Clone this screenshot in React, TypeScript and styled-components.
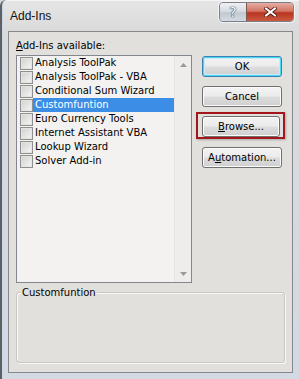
import React from "react";
import styled, { createGlobalStyle } from "styled-components";

const Global = createGlobalStyle`
  html, body { margin: 0; padding: 0; background: #d4d6da; }
  body { font-family: "Liberation Sans", Arial, sans-serif; }
`;

const Window = styled.div`
  width: 299px;
  height: 379px;
  box-sizing: border-box;
  display: flex;
  flex-direction: column;
  border-left: 2px solid #5e6064;
  border-top-left-radius: 6px;
  background: linear-gradient(180deg, #e6e6e6 0px, #dadada 31px, #d3dae4 100%);
  box-shadow: inset 1px 0 0 #c8d6e8, inset 0 1px 0 #f4f4f4;
  overflow: hidden;
`;

const TitleBar = styled.div`
  height: 31px;
  flex: none;
  display: flex;
  align-items: flex-start;
  justify-content: space-between;
  padding-left: 8px;
  padding-right: 5px;
`;

const Title = styled.div`
  font-size: 12px;
  line-height: 14px;
  margin-top: 9px;
  color: #111;
`;

const Caption = styled.div`
  display: flex;
  margin-top: 2px;
  border: 1px solid #7b7f86;
  border-radius: 4px;
  overflow: hidden;
  box-shadow: 0 0 0 1px rgba(255, 255, 255, 0.6);
`;

const CapBtn = styled.div<{ $close?: boolean }>`
  width: ${(p) => (p.$close ? 46 : 26)}px;
  height: 18px;
  display: flex;
  align-items: center;
  justify-content: center;
  background: ${(p) =>
    p.$close
      ? "linear-gradient(180deg, #e6aea4 0%, #d37464 45%, #b8341f 55%, #cb5a42 100%)"
      : "linear-gradient(180deg, #eef0f3 0%, #d8dce2 45%, #c3c9d1 55%, #d4dae1 100%)"};
  border-left: ${(p) => (p.$close ? "1px solid #7b5750" : "none")};
  font-family: "DejaVu Sans", sans-serif;
  font-size: 14px;
  color: #fff;
  text-shadow: 0 0 1px #3d4450, 0 0 1px #3d4450, 0 0 1px #3d4450;
  line-height: 1;
`;

const Client = styled.div`
  flex: 1;
  margin: 0 6px 6px 6px;
  border: 1px solid #85878b;
  background: #e2e0dd;
  padding: 7px 7px 9px 7px;
  display: flex;
  flex-direction: column;
  font-family: "DejaVu Sans", Verdana, sans-serif;
  font-size: 10px;
  color: #000;
`;

const Label = styled.div`
  line-height: 13px;
  height: 13px;
  margin-bottom: 3px;
  u { text-decoration: underline; }
`;

const TopRow = styled.div`
  display: flex;
  align-items: flex-start;
`;

const ListBox = styled.div`
  width: 176px;
  height: 228px;
  box-sizing: border-box;
  border: 1px solid #828790;
  background: #f3f2f0;
  display: flex;
`;

const Items = styled.div`
  flex: 1;
  display: flex;
  flex-direction: column;
`;

const Row = styled.div`
  height: 14px;
  display: flex;
  align-items: center;
`;

const Check = styled.span`
  width: 11px;
  height: 11px;
  flex: none;
  margin-left: 3px;
  border: 1px solid #8f8f8f;
  background: linear-gradient(135deg, #d0d0d0 0%, #ebebeb 70%, #f6f6f6 100%);
  box-shadow: inset 0 0 0 1px #e4e4e4;
`;

const ItemText = styled.span<{ $sel?: boolean }>`
  flex: 1;
  height: 14px;
  line-height: 14px;
  padding-left: 2px;
  white-space: nowrap;
  background: ${(p) => (p.$sel ? "#3b8de6" : "transparent")};
  color: ${(p) => (p.$sel ? "#fff" : "#000")};
`;

const ScrollBar = styled.div`
  width: 17px;
  flex: none;
  display: flex;
  flex-direction: column;
  justify-content: space-between;
  background: #eeedeb;
  border-left: 1px solid #e6e5e3;
  box-sizing: border-box;
`;

const ArrowBox = styled.div`
  height: 17px;
  display: flex;
  align-items: center;
  justify-content: center;
`;

const ButtonColumn = styled.div`
  margin-left: 10px;
  width: 80px;
  display: flex;
  flex-direction: column;
`;

const Button = styled.div<{ $default?: boolean; $mt?: number }>`
  height: 21px;
  box-sizing: border-box;
  margin-top: ${(p) => p.$mt ?? 0}px;
  border: 1px solid ${(p) => (p.$default ? "#3c7fb1" : "#707070")};
  border-radius: 3px;
  background: linear-gradient(180deg, #f3f3f3 0%, #ebebeb 48%, #dddddd 52%, #cfcfcf 100%);
  box-shadow: ${(p) =>
    p.$default ? "inset 0 0 0 1px #48d8f8, inset 0 0 0 2px #c8eaf6" : "inset 0 0 0 1px #fbfbfb"};
  display: flex;
  align-items: center;
  justify-content: center;
  u { text-decoration: underline; }
`;

const Highlight = styled.div`
  margin: 5px -3px 0 -6px;
  border: 2px solid #a3161b;
  padding: 2px 3px 0 4px;
  box-shadow: 1px 1px 2px rgba(0, 0, 0, 0.25);
`;

const GroupBox = styled.div`
  position: relative;
  margin-top: 9px;
  width: 269px;
  height: 71px;
  box-sizing: border-box;
  border: 1px solid #c9c7c4;
  border-radius: 3px;
  box-shadow: inset 1px 1px 0 #f8f8f8, 1px 1px 0 #f8f8f8;
`;

const GroupLegend = styled.span`
  position: absolute;
  top: -7px;
  left: 4px;
  padding: 0 1px;
  line-height: 13px;
  background: #e2e0dd;
`;

const items = [
  "Analysis ToolPak",
  "Analysis ToolPak - VBA",
  "Conditional Sum Wizard",
  "Customfuntion",
  "Euro Currency Tools",
  "Internet Assistant VBA",
  "Lookup Wizard",
  "Solver Add-in",
];

export default function App() {
  return (
    <>
      <Global />
      <Window>
        <TitleBar>
          <Title>Add-Ins</Title>
          <Caption>
            <CapBtn>?</CapBtn>
            <CapBtn $close>
              <svg width="13" height="10" viewBox="0 0 13 10">
                <path
                  d="M2 1.5 L11 8.5 M11 1.5 L2 8.5"
                  stroke="#4a1510"
                  strokeWidth="3.6"
                  strokeLinecap="square"
                />
                <path
                  d="M2 1.5 L11 8.5 M11 1.5 L2 8.5"
                  stroke="#ffffff"
                  strokeWidth="2"
                  strokeLinecap="square"
                />
              </svg>
            </CapBtn>
          </Caption>
        </TitleBar>
        <Client>
          <Label>
            <u>A</u>dd-Ins available:
          </Label>
          <TopRow>
            <ListBox>
              <Items>
                {items.map((it, i) => (
                  <Row key={it}>
                    <Check />
                    <ItemText $sel={i === 3}>{it}</ItemText>
                  </Row>
                ))}
              </Items>
              <ScrollBar>
                <ArrowBox>
                  <svg width="7" height="4" viewBox="0 0 7 4">
                    <path d="M0 4 L3.5 0 L7 4 Z" fill="#9a9a9a" />
                  </svg>
                </ArrowBox>
                <ArrowBox>
                  <svg width="7" height="4" viewBox="0 0 7 4">
                    <path d="M0 0 L3.5 4 L7 0 Z" fill="#9a9a9a" />
                  </svg>
                </ArrowBox>
              </ScrollBar>
            </ListBox>
            <ButtonColumn>
              <Button $default $mt={1}>OK</Button>
              <Button $mt={9}>Cancel</Button>
              <Highlight>
                <Button>
                  <span>
                    <u>B</u>rowse...
                  </span>
                </Button>
              </Highlight>
              <Button $mt={8}>
                <span>
                  A<u>u</u>tomation...
                </span>
              </Button>
            </ButtonColumn>
          </TopRow>
          <GroupBox>
            <GroupLegend>Customfuntion</GroupLegend>
          </GroupBox>
        </Client>
      </Window>
    </>
  );
}
